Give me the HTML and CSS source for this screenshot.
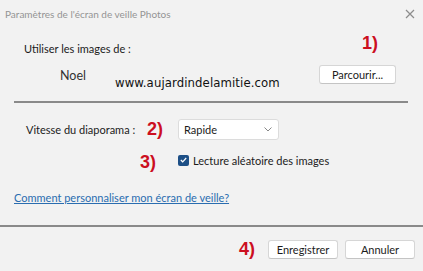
FILE: index.html
```html
<!DOCTYPE html>
<html lang="fr">
<head>
  <meta charset="UTF-8">
  <title>Paramètres de l'écran de veille Photos</title>
  <link rel="stylesheet" href="styles.css">
</head>
<body>
  <div class="dialog">
    <div class="titlebar">
      <span class="title">Paramètres de l'écran de veille Photos</span>
      <svg class="close" width="10" height="10" viewBox="0 0 10 10">
        <path d="M1 1 L9 9 M9 1 L1 9" stroke="#8c8c8c" stroke-width="1.2" fill="none"/>
      </svg>
    </div>

    <section class="source">
      <div class="row source-head">
        <span class="label">Utiliser les images de :</span>
        <span class="step step-1">1)</span>
      </div>
      <div class="row source-pick">
        <span class="folder">Noel</span>
        <span class="watermark">www.aujardindelamitie.com</span>
        <button class="btn btn-browse">Parcourir...</button>
      </div>
    </section>

    <hr class="sep">

    <section class="options">
      <div class="row speed">
        <span class="label label-speed">Vitesse du diaporama :</span>
        <span class="step step-2">2)</span>
        <div class="select">
          <span>Rapide</span>
          <svg width="8" height="5" viewBox="0 0 8 5">
            <path d="M0.5 0.5 L4 4 L7.5 0.5" stroke="#888" stroke-width="1" fill="none"/>
          </svg>
        </div>
      </div>
      <div class="row shuffle">
        <span class="step step-3">3)</span>
        <span class="check">
          <svg width="7" height="6" viewBox="0 0 7 6">
            <path d="M0.8 3 L2.7 4.8 L6.2 1" stroke="#fff" stroke-width="1.2" fill="none"/>
          </svg>
        </span>
        <span class="check-label">Lecture aléatoire des images</span>
      </div>
      <a class="help" href="#">Comment personnaliser mon écran de veille?</a>
    </section>

    <footer class="actions">
      <span class="step step-4">4)</span>
      <button class="btn">Enregistrer</button>
      <button class="btn">Annuler</button>
    </footer>
  </div>
</body>
</html>
```

FILE: styles.css
```css
:root {
  --bg: #f2f2f2;
  --text: #1b1b1b;
  --step: #cc0f1f;
  --line: #8a8a8a;
  --btn-border: #d6d6d6;
  --link: #2a6db0;
}
body {
  margin: 0;
  background: var(--bg);
  font-family: 'Lato', 'Noto Sans', Arial, sans-serif;
  font-size: 11px;
  color: var(--text);
}
.dialog {
  width: 423px;
  height: 271px;
  display: flex;
  flex-direction: column;
  overflow: hidden;
}
.titlebar {
  height: 27px;
  display: flex;
  align-items: center;
  justify-content: space-between;
  padding: 0 8px 0 5px;
  flex-shrink: 0;
}
.title {
  color: #949494;
  font-size: 10px;
}
.row {
  display: flex;
  align-items: center;
}
.step {
  color: var(--step);
  font-family: 'Liberation Sans', Arial, sans-serif;
  font-weight: bold;
  font-size: 18px;
}
.source {
  padding: 0 27px 0 24px;
}
.source-head {
  height: 28px;
  margin-top: 7px;
  justify-content: space-between;
}
.step-1 {
  margin-right: 18px;
  margin-top: -10px;
}
.source-pick {
  height: 30px;
}
.folder {
  margin-left: 36px;
  font-size: 12.5px;
  color: #333;
  margin-top: -3px;
  width: 55px;
}
.watermark {
  font-family: 'DejaVu Sans Condensed', 'DejaVu Sans', sans-serif;
  font-size: 13px;
  color: #111;
  letter-spacing: 0.1px;
  margin-top: 11px;
}
.btn {
  font-family: inherit;
  font-size: 11px;
  color: var(--text);
  background: #fff;
  border: 1px solid var(--btn-border);
  border-bottom-color: #c4c4c4;
  border-radius: 3px;
  height: 19px;
  padding: 0;
}
.btn-browse {
  margin-left: auto;
  width: 77px;
  margin-top: -5px;
}
.sep {
  margin: 9px 15px 0 14px;
  border: none;
  border-top: 2px solid var(--line);
  height: 0;
}
.options {
  padding: 0 14px;
  display: flex;
  flex-direction: column;
}
.speed {
  height: 22px;
  margin-top: 15px;
  padding-left: 12px;
}
.label-speed {
  width: 121px;
}
.step-2 {
  width: 31px;
}
.select {
  width: 101px;
  height: 21px;
  box-sizing: border-box;
  background: #fff;
  border: 1px solid #dcdcdc;
  border-radius: 3px;
  display: flex;
  align-items: center;
  justify-content: space-between;
  padding: 0 6px 0 5px;
}
.shuffle {
  height: 20px;
  margin-top: 12px;
  padding-left: 126px;
}
.step-3 {
  width: 38px;
}
.check {
  width: 11px;
  height: 11px;
  background: #1d4f86;
  border-radius: 2px;
  display: flex;
  align-items: center;
  justify-content: center;
  margin-top: -4px;
}
.check-label {
  margin-left: 4px;
  margin-top: -4px;
}
.help {
  margin-top: 19px;
  color: var(--link);
  text-decoration: underline;
  font-size: 11px;
}
.actions {
  margin-top: auto;
  height: 44px;
  border-top: 2px solid var(--line);
  display: flex;
  align-items: center;
  justify-content: flex-end;
  gap: 7px;
  padding: 0 8px 0 0;
}
.actions .btn {
  width: 70px;
}
.step-4 {
  margin-right: 6px;
}
```
